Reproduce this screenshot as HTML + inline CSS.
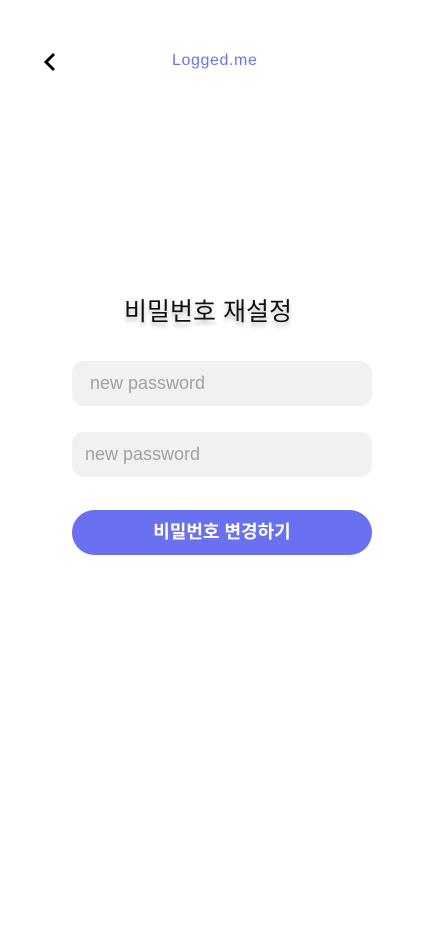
<!DOCTYPE html>
<html><head><meta charset="utf-8"><style>
body{margin:0;width:430px;height:932px;background:#fff;position:relative;font-family:"Liberation Sans","Noto Sans CJK KR",sans-serif;overflow:hidden}
.a{position:absolute}
.in{position:absolute;left:72px;width:300px;height:45px;background:#f1f1f1;border-radius:12px;color:#a2a2a2;font-size:18px;line-height:45px}
</style></head><body>
<svg class="a" style="left:40px;top:51px" width="20" height="22" viewBox="0 0 20 22"><path d="M14 3 L6 11 L14 19" fill="none" stroke="#000" stroke-width="3"/></svg>
<div class="a" style="left:172px;top:51px;font-size:16px;color:#6c72f0;line-height:20px;letter-spacing:0.6px">Logged.me</div>
<div class="a" style="left:124px;top:296px;font-size:25px;line-height:32px;color:#111;text-shadow:0 4px 4px rgba(0,0,0,0.25)">비밀번호 재설정</div>
<div class="in" style="top:361px;text-indent:18px">new password</div>
<div class="in" style="top:432px;text-indent:13px">new password</div>
<div class="a" style="left:72px;top:510px;width:300px;height:45px;border-radius:23px;background:#6a71f0;color:#fff;font-size:18px;font-weight:bold;text-align:center;line-height:45px">비밀번호 변경하기</div>
</body></html>
